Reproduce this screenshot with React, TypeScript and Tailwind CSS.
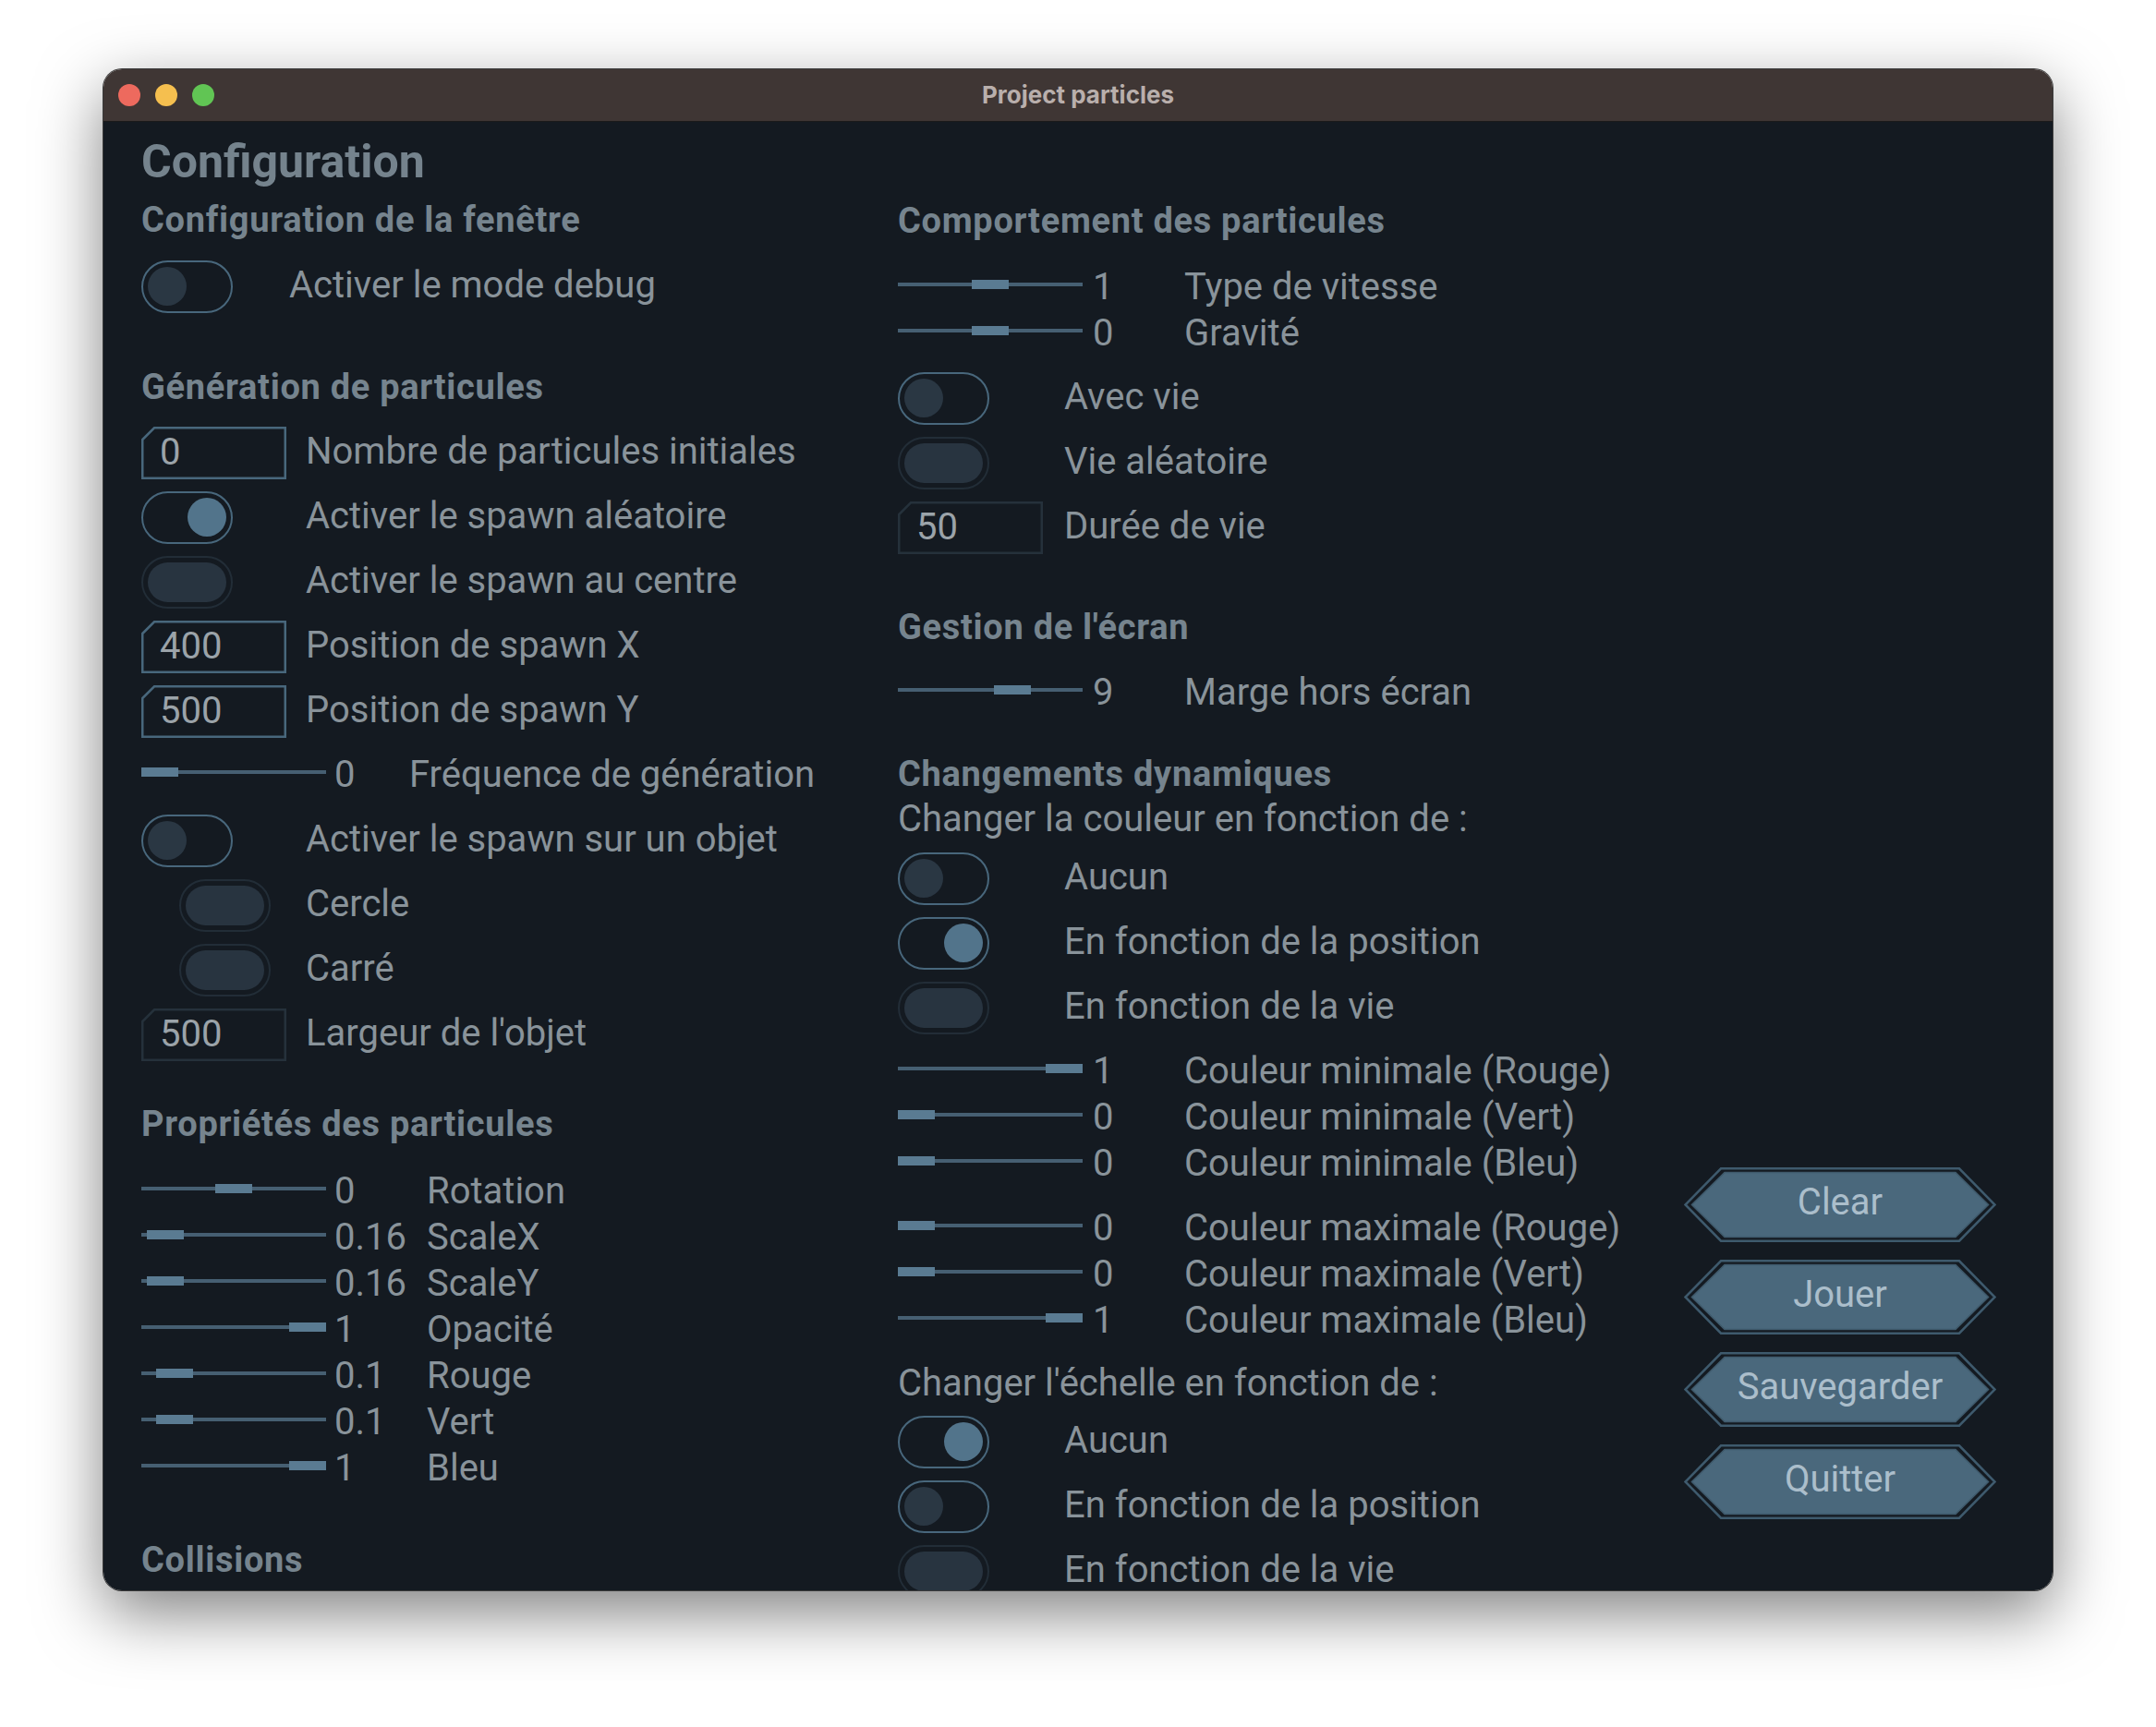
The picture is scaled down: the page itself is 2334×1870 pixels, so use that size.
import React from "react";

type TState = "off" | "on" | "disabled";

function Toggle({ state }: { state: TState }) {
  if (state === "disabled") {
    return (
      <div className="w-[99px] h-[57px] shrink-0 rounded-full border-[2.5px] border-[#222d37] p-[5px]">
        <div className="w-full h-full rounded-full bg-[#283440]" />
      </div>
    );
  }
  return (
    <div
      className={
        "w-[99px] h-[57px] shrink-0 rounded-full border-[2.5px] border-[#48677c] flex items-center px-[5px] " +
        (state === "on" ? "justify-end" : "justify-start")
      }
    >
      <div
        className={
          "w-[42px] h-[42px] rounded-full " +
          (state === "on" ? "bg-[#52748b]" : "bg-[#2a3743]")
        }
      />
    </div>
  );
}

function Label({ children }: { children: React.ReactNode }) {
  return (
    <div className="text-[40px] leading-[48px] text-[#89939a] mb-[3px] whitespace-nowrap">
      {children}
    </div>
  );
}

function ToggleRow({
  state,
  label,
  indent = false,
  wide = false,
  right = false,
}: {
  state: TState;
  label: string;
  indent?: boolean;
  wide?: boolean;
  right?: boolean;
}) {
  return (
    <div className="flex items-center h-[70px]">
      <div
        className={
          "shrink-0 flex " +
          (wide ? "w-[160px] " : right ? "w-[180px] " : "w-[178px] ") +
          (indent ? "pl-[41px]" : "")
        }
      >
        <Toggle state={state} />
      </div>
      <Label>{label}</Label>
    </div>
  );
}

function InputRow({
  value,
  label,
  disabled = false,
  right = false,
}: {
  value: string;
  label: string;
  disabled?: boolean;
  right?: boolean;
}) {
  return (
    <div className="flex items-center h-[70px]">
      <div className={"shrink-0 " + (right ? "w-[180px]" : "w-[178px]")}>
        <div className="grid w-[157px] h-[57px]">
          <svg
            className="[grid-area:1/1] w-[157px] h-[57px]"
            viewBox="0 0 157 57"
          >
            <polygon
              points="1.25,14 14,1.25 155.75,1.25 155.75,55.75 1.25,55.75"
              fill="none"
              stroke={disabled ? "#25313b" : "#48677c"}
              strokeWidth="2.5"
            />
          </svg>
          <div className="[grid-area:1/1] flex items-center pl-[20px] text-[40px] leading-[48px] text-[#9ba3a9]">
            {value}
          </div>
        </div>
      </div>
      <Label>{label}</Label>
    </div>
  );
}

function SliderRow({
  thumb,
  value,
  label,
  labelAt = 309,
  valueGap = 9,
}: {
  thumb: number;
  value: string;
  label: string;
  labelAt?: number;
  valueGap?: number;
}) {
  return (
    <div className="flex items-center h-[50px]">
      <div className="relative w-[200px] h-[10px] shrink-0 flex items-center">
        <div className="w-full h-[4px] bg-[#465f72]" />
        <div
          className="absolute top-0 h-[10px] w-[40px] bg-[#5a7b92]"
          style={{ left: thumb }}
        />
      </div>
      <div
        className="mt-[5px] shrink-0 text-[40px] leading-[48px] text-[#89939a]"
        style={{ width: labelAt - 200 - valueGap, marginLeft: valueGap }}
      >
        {value}
      </div>
      <div className="mt-[5px] text-[40px] leading-[48px] text-[#89939a] whitespace-nowrap">
        {label}
      </div>
    </div>
  );
}

function Heading({ children, className = "" }: { children: React.ReactNode; className?: string }) {
  return (
    <div
      className={
        "text-[38px] leading-[40px] font-bold tracking-[0.7px] text-[#76848e] whitespace-nowrap " +
        className
      }
    >
      {children}
    </div>
  );
}

function HexButton({ label }: { label: string }) {
  return (
    <div className="grid w-[338px] h-[81px]">
      <svg className="[grid-area:1/1] w-[338px] h-[81px]" viewBox="0 0 338 81">
        <polygon
          points="40,1.25 298,1.25 336.5,40.5 298,79.75 40,79.75 1.5,40.5"
          fill="none"
          stroke="#3e5a6d"
          strokeWidth="2.5"
        />
        <polygon
          points="44,5.5 294,5.5 329.5,40.5 294,75.5 44,75.5 8.5,40.5"
          fill="#4a687c"
          stroke="#3f5a6c"
          strokeWidth="1.5"
        />
      </svg>
      <div className="[grid-area:1/1] flex items-center justify-center pb-[6px] text-[40px] leading-[48px] text-[#abbecb]">
        {label}
      </div>
    </div>
  );
}

export default function App() {
  return (
    <div className="w-[2334px] h-[1870px] bg-white pt-[75px] pl-[112px] font-['Roboto',sans-serif] overflow-hidden">
      <div className="w-[2110px] h-[1647px] rounded-[20px] overflow-hidden flex flex-col ring-1 ring-[#3a3a3a] shadow-[0_24px_70px_rgba(0,0,0,0.5)]">
        {/* Title bar */}
        <div className="h-[57px] shrink-0 bg-[#3f3634] border-b border-[#1a1a1a] grid grid-cols-[1fr_auto_1fr] items-center">
          <div className="flex items-center gap-[16px] pl-[16px]">
            <div className="w-[24px] h-[24px] rounded-full bg-[#ed6a5e]" />
            <div className="w-[24px] h-[24px] rounded-full bg-[#f5bf4f]" />
            <div className="w-[24px] h-[24px] rounded-full bg-[#61c554]" />
          </div>
          <div className="font-['Inter',sans-serif] font-bold text-[26px] leading-[32px] text-[#b9afac]">
            Project particles
          </div>
          <div />
        </div>

        {/* Content */}
        <div className="flex-1 bg-[#141a21] overflow-hidden grid grid-cols-[819px_851px_1fr] pl-[41px]">
          {/* Column 1 */}
          <div className="flex flex-col">
            <div className="mt-[15px] text-[50px] leading-[56px] font-bold text-[#75838d] whitespace-nowrap">
              Configuration
            </div>
            <Heading className="mt-[15px]">Configuration de la fenêtre</Heading>
            <div className="mt-[17px]">
              <ToggleRow state="off" label="Activer le mode debug" wide />
            </div>
            <Heading className="mt-[54px]">Génération de particules</Heading>
            <div className="mt-[16px] flex flex-col">
              <InputRow value="0" label="Nombre de particules initiales" />
              <ToggleRow state="on" label="Activer le spawn aléatoire" />
              <ToggleRow state="disabled" label="Activer le spawn au centre" />
              <InputRow value="400" label="Position de spawn X" />
              <InputRow value="500" label="Position de spawn Y" />
              <div className="h-[62px] flex items-center">
                <SliderRow thumb={0} value="0" label="Fréquence de génération" labelAt={290} />
              </div>
              <div className="mt-[8px] flex flex-col">
                <ToggleRow state="off" label="Activer le spawn sur un objet" />
                <ToggleRow state="disabled" label="Cercle" indent />
                <ToggleRow state="disabled" label="Carré" indent />
                <InputRow value="500" label="Largeur de l'objet" disabled />
              </div>
            </div>
            <Heading className="mt-[42px]">Propriétés des particules</Heading>
            <div className="mt-[25px] flex flex-col">
              <SliderRow thumb={80} value="0" label="Rotation" />
              <SliderRow thumb={6} value="0.16" label="ScaleX" />
              <SliderRow thumb={6} value="0.16" label="ScaleY" />
              <SliderRow thumb={160} value="1" label="Opacité" />
              <SliderRow thumb={16} value="0.1" label="Rouge" />
              <SliderRow thumb={16} value="0.1" label="Vert" />
              <SliderRow thumb={160} value="1" label="Bleu" />
            </div>
            <Heading className="mt-[57px]">Collisions</Heading>
          </div>

          {/* Column 2 */}
          <div className="flex flex-col">
            <Heading className="mt-[87px]">Comportement des particules</Heading>
            <div className="mt-[24px] flex flex-col">
              <SliderRow thumb={80} value="1" label="Type de vitesse" labelAt={310} valueGap={11} />
              <SliderRow thumb={80} value="0" label="Gravité" labelAt={310} valueGap={11} />
            </div>
            <div className="mt-[13px] flex flex-col">
              <ToggleRow state="off" label="Avec vie" right />
              <ToggleRow state="disabled" label="Vie aléatoire" right />
              <InputRow value="50" label="Durée de vie" disabled right />
            </div>
            <Heading className="mt-[53px]">Gestion de l'écran</Heading>
            <div className="mt-[23px]">
              <SliderRow thumb={104} value="9" label="Marge hors écran" labelAt={310} valueGap={11} />
            </div>
            <Heading className="mt-[46px]">Changements dynamiques</Heading>
            <div className="mt-[5px] text-[40px] leading-[48px] text-[#89939a] whitespace-nowrap">
              Changer la couleur en fonction de :
            </div>
            <div className="mt-[5px] flex flex-col">
              <ToggleRow state="off" label="Aucun" right />
              <ToggleRow state="on" label="En fonction de la position" right />
              <ToggleRow state="disabled" label="En fonction de la vie" right />
            </div>
            <div className="mt-[6px] flex flex-col">
              <SliderRow thumb={160} value="1" label="Couleur minimale (Rouge)" labelAt={310} valueGap={11} />
              <SliderRow thumb={0} value="0" label="Couleur minimale (Vert)" labelAt={310} valueGap={11} />
              <SliderRow thumb={0} value="0" label="Couleur minimale (Bleu)" labelAt={310} valueGap={11} />
            </div>
            <div className="mt-[20px] flex flex-col">
              <SliderRow thumb={0} value="0" label="Couleur maximale (Rouge)" labelAt={310} valueGap={11} />
              <SliderRow thumb={0} value="0" label="Couleur maximale (Vert)" labelAt={310} valueGap={11} />
              <SliderRow thumb={160} value="1" label="Couleur maximale (Bleu)" labelAt={310} valueGap={11} />
            </div>
            <div className="mt-[22px] text-[40px] leading-[48px] text-[#89939a] whitespace-nowrap">
              Changer l'échelle en fonction de :
            </div>
            <div className="mt-[4px] flex flex-col">
              <ToggleRow state="on" label="Aucun" right />
              <ToggleRow state="off" label="En fonction de la position" right />
              <ToggleRow state="disabled" label="En fonction de la vie" right />
            </div>
          </div>

          {/* Column 3 */}
          <div className="flex flex-col justify-end gap-[19px] pb-[91px]">
            <HexButton label="Clear" />
            <HexButton label="Jouer" />
            <HexButton label="Sauvegarder" />
            <HexButton label="Quitter" />
          </div>
        </div>
      </div>
    </div>
  );
}
